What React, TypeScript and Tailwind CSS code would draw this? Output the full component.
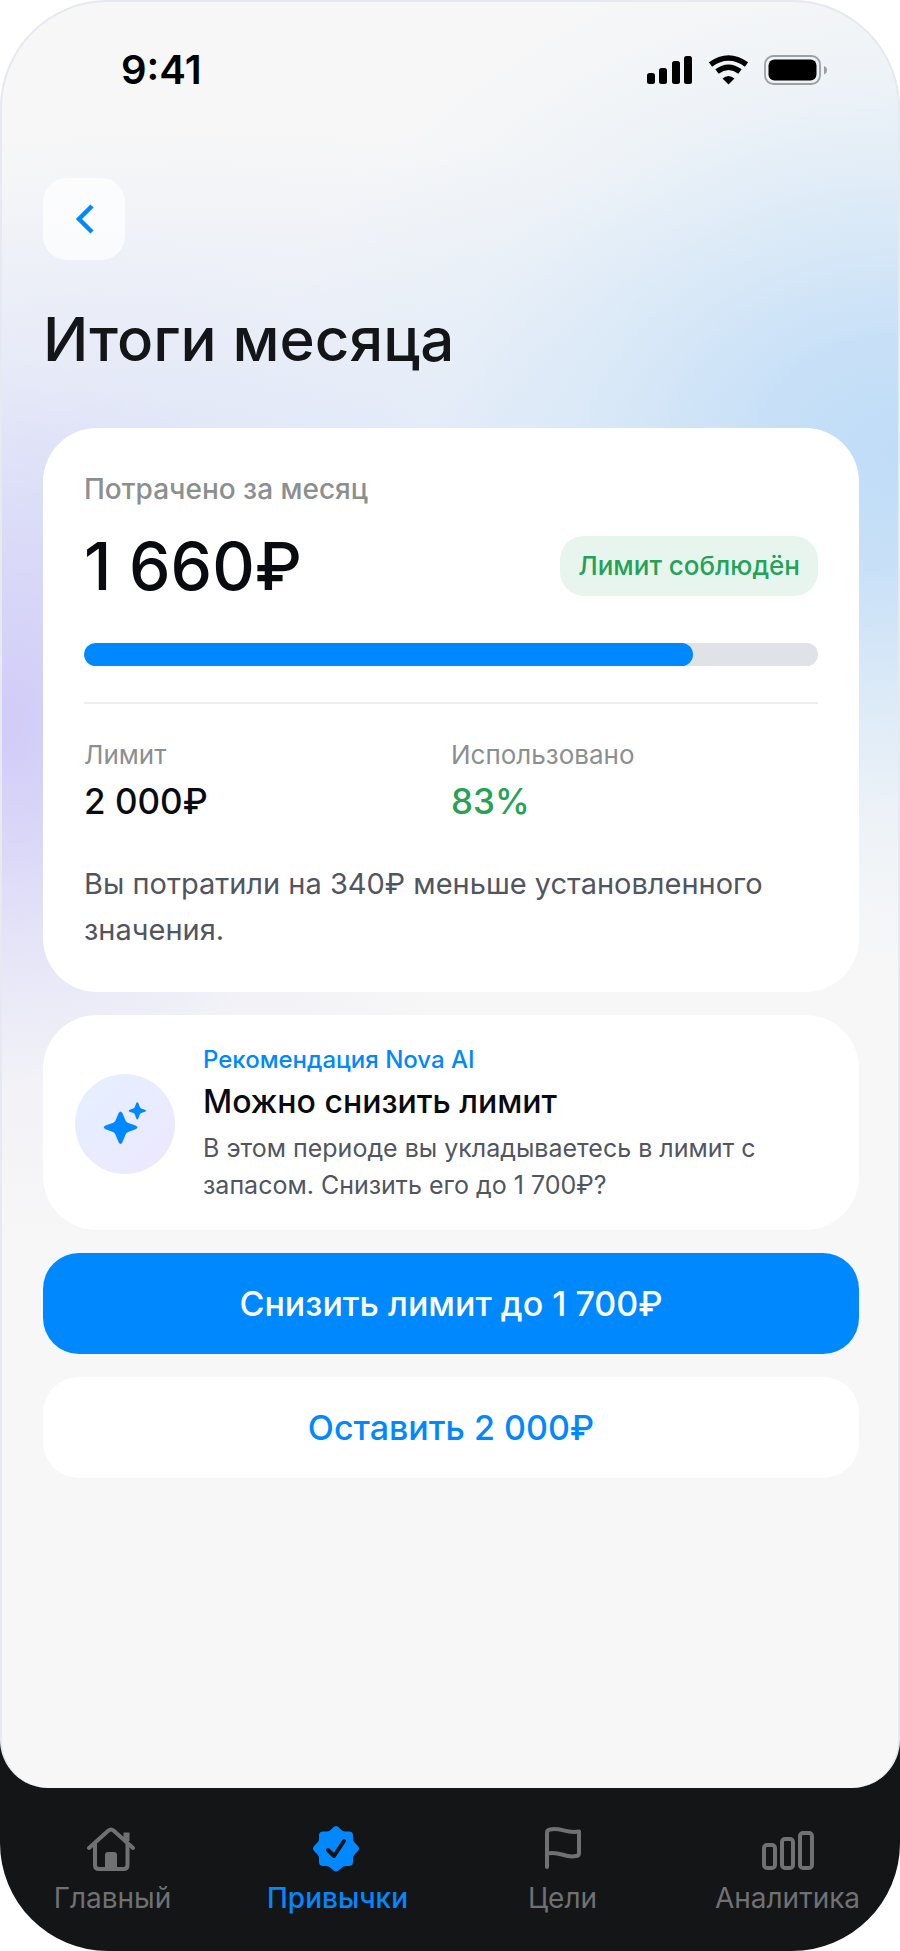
import type { ReactNode } from "react";

function StatusBar() {
  return (
    <div className="flex items-center justify-between pt-[46px] pl-[119px] pr-[69px]">
      <span className="text-[40px] leading-[44px] font-semibold text-black">9:41</span>
      <svg width="182" height="32" viewBox="0 0 182 32" fill="none" aria-hidden="true">
        <rect x="0" y="19" width="8" height="11" rx="2.5" fill="#000" />
        <rect x="12" y="14" width="8" height="16" rx="2.5" fill="#000" />
        <rect x="25" y="7" width="8" height="23" rx="2.5" fill="#000" />
        <rect x="37" y="2" width="8" height="28" rx="2.5" fill="#000" />
        <path d="M63.500 10.500Q81.500 -2.500 99.500 10.500" stroke="#000" strokeWidth="5.500" />
        <path d="M70 17.500Q81.500 9 93 17.500" stroke="#000" strokeWidth="5.500" />
        <path d="M75.500 24.500Q81.500 19.500 87.500 24.500L81.500 30.500Z" fill="#000" />
        <rect x="118" y="2" width="55" height="28" rx="8.500" stroke="#9aa0a6" strokeWidth="1.800" />
        <rect x="121.500" y="5.500" width="48" height="21" rx="6" fill="#000" />
        <path d="M177 12Q180 13 180 16Q180 19.500 177 20.500Z" fill="#9aa0a6" />
      </svg>
    </div>
  );
}

function SummaryCard() {
  return (
    <section className="rounded-[54px] bg-white px-[41px] pt-[43px] pb-[39px]">
      <h2 className="text-[28px] leading-[36px] font-medium text-[#8c8f90]">
        Потрачено за месяц
      </h2>
      <div className="mt-[11px] flex items-center justify-between">
        <p className="text-[66px] leading-[96px] font-medium text-[#0a0b10]">1 660₽</p>
        <span className="rounded-3xl bg-[#e7f5ee] px-[18px] py-3 text-[26px] leading-[36px] font-medium text-[#24a258]">
          Лимит соблюдён
        </span>
      </div>
      <div
        role="progressbar"
        aria-label="Использовано"
        aria-valuenow={83}
        className="mt-[29px] h-[23px] overflow-hidden rounded-full bg-[#e1e2e7]"
      >
        <div className="h-full w-[83%] rounded-full bg-[#0088ff]" />
      </div>
      <dl className="mt-9 grid grid-cols-2 border-t-2 border-[#eeeeee] pt-[33px]">
        <div>
          <dt className="text-[26px] leading-[36px] text-[#8c8f90]">Лимит</dt>
          <dd className="mt-1.5 text-[35px] leading-[44px] font-medium text-[#0a0b10]">2 000₽</dd>
        </div>
        <div>
          <dt className="text-[26px] leading-[36px] text-[#8c8f90]">Использовано</dt>
          <dd className="mt-1.5 text-[35px] leading-[44px] font-medium text-[#24a258]">83%</dd>
        </div>
      </dl>
      <p className="mt-[38px] text-[29px] leading-[46px] text-[#515562]">
        Вы потратили на 340₽ меньше установленного значения.
      </p>
    </section>
  );
}

function Recommendation() {
  return (
    <section className="flex items-center gap-7 rounded-[54px] bg-white pt-7 pr-16 pb-[26px] pl-8">
      <div className="flex size-[100px] shrink-0 items-center justify-center rounded-full bg-linear-to-br from-[#e4f0ff] to-[#eee7ff]">
        <svg width="44" height="44" viewBox="0 0 44 44" fill="#0088ff" aria-hidden="true">
          <path d="M15.500 11.300Q17.500 7.800 19.500 11.300L22.500 18.500Q23.200 20 24.700 20.700L32.500 23.500Q36.500 25.300 32.500 27.300L25 30Q23.300 30.700 22.700 32.200L19.500 40Q17.500 44 15.500 40L12.300 32.200Q11.700 30.700 10.200 30L2.500 27.300Q-1 25.300 2.500 23.500L10.300 20.700Q11.800 20 12.500 18.500Z" />
          <path d="M33.300 1Q34.300 -.5 35.300 1L36.800 5Q37.200 6 38.200 6.400L42 7.800Q44 8.700 42 9.700L38.200 11.100Q37.200 11.500 36.800 12.500L35.300 16.500Q34.300 18.500 33.300 16.500L31.800 12.500Q31.400 11.500 30.400 11.100L26.600 9.700Q25 8.700 26.600 7.800L30.400 6.400Q31.400 6 31.800 5Z" />
        </svg>
      </div>
      <div>
        <p className="text-[24px] leading-[34px] font-medium text-[#0088ff]">
          Рекомендация Nova AI
        </p>
        <h2 className="mt-[3px] text-[32px] leading-[44px] font-medium text-[#0a0b10]">
          Можно снизить лимит
        </h2>
        <p className="mt-1.5 text-[25px] leading-[37px] text-[#515562]">
          В этом периоде вы укладываетесь в лимит с запасом. Снизить его до 1 700₽?
        </p>
      </div>
    </section>
  );
}

function NavItem({ label, active, children }: { label: string; active?: boolean; children: ReactNode }) {
  return (
    <a
      href="#"
      aria-current={active ? "page" : undefined}
      className={`flex flex-col items-center gap-2 text-[28px] leading-[36px] ${
        active ? "font-medium text-[#0088ff]" : "text-[#6f7173]"
      }`}
    >
      <svg width="52" height="48" viewBox="0 0 52 48" fill="none" strokeLinecap="round" strokeLinejoin="round" aria-hidden="true">
        {children}
      </svg>
      {label}
    </a>
  );
}

function BottomNav() {
  return (
    <nav className="grid grid-cols-4 pt-9 pb-[35px]">
      <NavItem label="Главный">
        <g stroke="currentColor" strokeWidth="4">
          <path d="M2 24L21.500 6.500Q24 4.500 26.500 6.500L46 24" />
          <path d="M8 20V41Q8 45 12 45H36.500Q40.500 45 40.500 41V20" />
          <path d="M39.500 17V8.500" strokeWidth="6" strokeLinecap="butt" />
        </g>
        <path d="M18 31Q18 28 21 28H27Q30 28 30 31V45H18Z" fill="currentColor" />
      </NavItem>
      <NavItem label="Привычки" active>
        <g transform="translate(-2 0)">
          <path
            d="M23 3.500Q26 .5 29 3.500L32 6.500Q33.500 7.500 35.500 7.500H39Q43 7.500 43 11.500V15Q43 17 44.500 18.500L47.500 21.500Q50.500 24.500 47.500 27.500L44.500 30.500Q43 32 43 34V38Q43 42 39 42H35.500Q33.500 42 32 43.500L29 46Q26 49 23 46L20 43.500Q18.500 42 16.500 42H13Q9 42 9 38V34Q9 32 7.500 30.500L4.500 27.500Q1.500 24.500 4.500 21.500L7.500 18.500Q9 17 9 15V11.500Q9 7.500 13 7.500H16.500Q18.500 7.500 20 6.500Z"
            fill="currentColor"
          />
          <path d="M18 26L24 32L34 17" stroke="#141517" strokeWidth="4" />
        </g>
      </NavItem>
      <NavItem label="Цели">
        <path
          d="M10 43V9Q10 6 13 5.500C24 3 29 10 42 7.500V29Q42 32 39 32C28 34.500 23 26.500 10 29.500"
          stroke="currentColor"
          strokeWidth="4"
        />
      </NavItem>
      <NavItem label="Аналитика">
        <g stroke="currentColor" strokeWidth="4">
          <rect x="2" y="21" width="11" height="23" rx="3" />
          <rect x="20" y="15" width="11" height="29" rx="3" />
          <rect x="38" y="9" width="12" height="35" rx="3" />
        </g>
      </NavItem>
    </nav>
  );
}

export default function App() {
  return (
    <div className="flex min-h-screen flex-col overflow-hidden rounded-[108px] bg-[linear-gradient(#e6e9f1_50%,#141517_50%)] font-['Inter','Noto_Sans',sans-serif]">
      <div className="flex-1 rounded-t-[108px] rounded-b-[48px] border-2 border-b-0 border-[#e6e9f1] bg-[#f7f7f7] bg-[radial-gradient(ellipse_520px_520px_at_0px_720px,#d1cbf7_0%,#d3cff8cc_22%,#d9d7f888_46%,#e4e4f844_70%,#f0f0f800_100%),radial-gradient(ellipse_640px_520px_at_900px_450px,#bfdcf7_0%,#c3def7e6_22%,#cfe4f8a6_48%,#dfecf855_74%,#f0f6f800_100%),radial-gradient(ellipse_780px_400px_at_200px_520px,#dce6f8_0%,#e3eaf8aa_50%,#f0f3f800_100%)]">
        <StatusBar />
        <main className="flex flex-col gap-[23px] pt-[86px] pr-[39px] pb-10 pl-[41px]">
          <header>
            <button
              type="button"
              aria-label="Назад"
              className="flex size-[82px] items-center justify-center rounded-3xl bg-white/70"
            >
              <svg width="20" height="32" viewBox="0 0 20 32" fill="none" aria-hidden="true">
                <path d="M18 3L5 16L18 29" stroke="#0088ff" strokeWidth="4.500" />
              </svg>
            </button>
            <h1 className="mt-[41px] mb-7 text-[60px] leading-[76px] font-medium text-[#141517]">Итоги месяца</h1>
          </header>
          <SummaryCard />
          <Recommendation />
          <button type="button" className="h-[101px] rounded-[36px] bg-[#0088ff] text-[34px] font-medium text-white">
            Снизить лимит до 1 700₽
          </button>
          <button type="button" className="h-[101px] rounded-[36px] bg-white text-[34px] font-medium text-[#0088ff]">
            Оставить 2 000₽
          </button>
        </main>
      </div>
      <BottomNav />
    </div>
  );
}
